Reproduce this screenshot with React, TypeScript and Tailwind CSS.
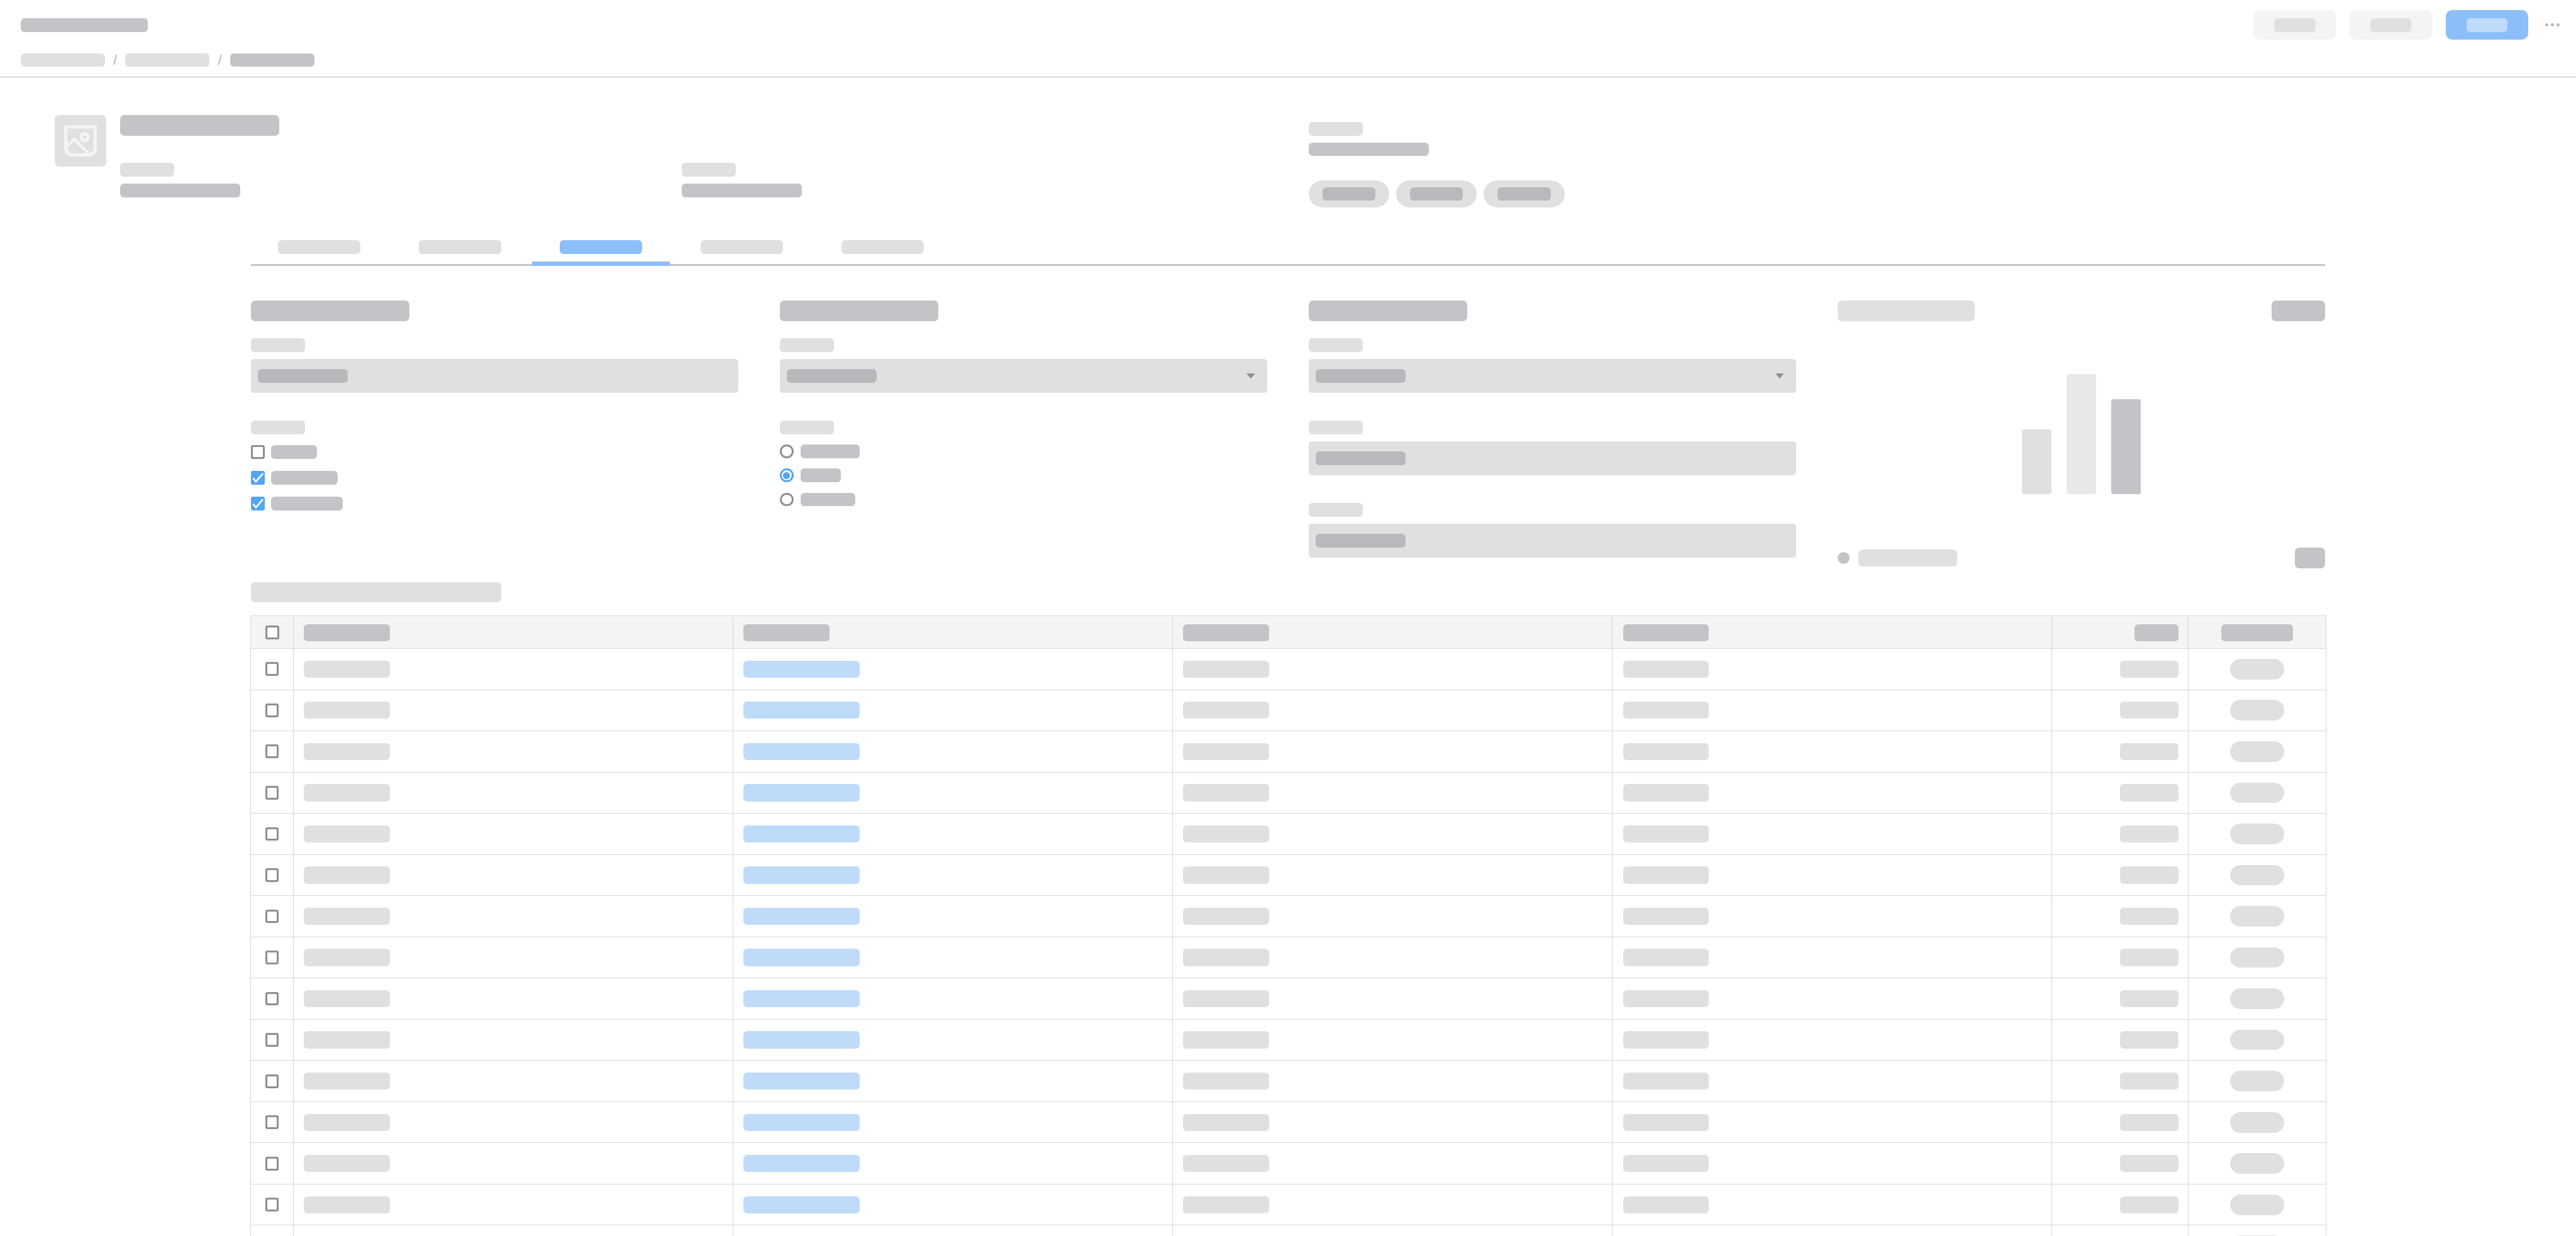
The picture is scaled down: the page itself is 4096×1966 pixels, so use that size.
const rows = Array.from({ length: 15 }, (_, i) => i);

function LogoIcon() {
  return (
    <svg viewBox="0 0 76 74" className="w-[51.88px] h-[50.52px]" fill="none" stroke="#f4f4f4">
      <path d="M4 4H72V54a16 16 0 0 1-16 16H20a16 16 0 0 1-16-16Z" strokeWidth="8" />
      <circle cx="48" cy="28" r="8" strokeWidth="8" />
      <path d="M8 48L23.5 33L57 66" strokeWidth="7" />
    </svg>
  );
}

function Checkbox({ checked = false, className = "" }: { checked?: boolean; className?: string }) {
  if (checked) {
    return (
      <span className="flex w-[21.85px] h-[21.85px] shrink-0 items-center justify-center rounded-[3px] bg-[#52a5f7]">
        <svg viewBox="0 0 32 32" className="w-[21.85px] h-[21.85px]" fill="none" stroke="#ffffff" strokeWidth="4">
          <path d="M5 17L11.5 25L28 6" />
        </svg>
      </span>
    );
  }
  return (
    <span
      className={`block w-[21.85px] h-[21.85px] shrink-0 rounded-[3px] border-[3px] border-[#8e8e93] bg-white ${className}`}
    />
  );
}

function Radio({ selected = false }: { selected?: boolean }) {
  if (selected) {
    return (
      <span className="flex w-[21.85px] h-[21.85px] shrink-0 items-center justify-center rounded-full border-[3px] border-[#52a5f7] bg-white">
        <span className="block w-[11px] h-[11px] rounded-full bg-[#52a5f7]" />
      </span>
    );
  }
  return <span className="block w-[21.85px] h-[21.85px] shrink-0 rounded-full border-[3px] border-[#8e8e93] bg-white" />;
}

function Heading() {
  return <div className="w-[252.58px] h-[32.77px] rounded-[7px] bg-[#c4c4c8]" />;
}

function Label() {
  return <div className="w-[86.02px] h-[21.85px] rounded-[6px] bg-[#e0e0e0]" />;
}

function Field({ select = false }: { select?: boolean }) {
  return (
    <div className="mt-[10.92px] flex h-[54.61px] items-center justify-between rounded-[5px] bg-[#e0e0e0] pl-[10.92px] pr-[19.8px]">
      <div className="w-[143.36px] h-[21.85px] rounded-[6px] bg-[#b9b9bd]" />
      {select && (
        <svg viewBox="0 0 20 12" className="w-[13.65px] h-[8.19px]" fill="#8e8e93">
          <polygon points="0,0 20,0 10,12" />
        </svg>
      )}
    </div>
  );
}

function Pill() {
  return (
    <div className="flex h-[43.69px] w-[128.34px] items-center justify-center rounded-full bg-[#e0e0e0]">
      <div className="w-[84.65px] h-[21.85px] rounded-[6px] bg-[#b9b9bd]" />
    </div>
  );
}

function Tab({ active = false }: { active?: boolean }) {
  return (
    <div
      className={`-mb-[3px] flex w-[218.45px] justify-center border-b-[7px] pt-[16.38px] pb-[12.12px] ${
        active ? "border-[#8cbff9]" : "border-transparent"
      }`}
    >
      <div className={`w-[131.07px] h-[21.85px] rounded-[6px] ${active ? "bg-[#8cbff9]" : "bg-[#e0e0e0]"}`} />
    </div>
  );
}

function HeaderCellBar() {
  return <div className="w-[136.53px] h-[27.31px] rounded-[6px] bg-[#c4c4c8]" />;
}

function BodyCellBar() {
  return <div className="w-[136.53px] h-[27.31px] rounded-[6px] bg-[#e0e0e0]" />;
}

export default function App() {
  return (
    <div className="w-[4096px] h-[1966px] overflow-hidden bg-white font-['Liberation_Sans',sans-serif]">
      {/* top bar */}
      <header className="flex h-[122.88px] justify-between border-b border-[#b5b5b5] pl-[32.77px] pr-[26px]">
        <div className="pt-[28.67px]">
          <div className="w-[202.07px] h-[21.85px] rounded-[6px] bg-[#c4c4c8]" />
          <div className="mt-[34.13px] flex items-center">
            <div className="w-[133.8px] h-[21.85px] rounded-[6px] bg-[#e0e0e0]" />
            <span className="w-[32.77px] text-center text-[22px] leading-[21.85px] text-[#b3b3b8]">/</span>
            <div className="w-[133.8px] h-[21.85px] rounded-[6px] bg-[#e0e0e0]" />
            <span className="w-[32.77px] text-center text-[22px] leading-[21.85px] text-[#b3b3b8]">/</span>
            <div className="w-[133.8px] h-[21.85px] rounded-[6px] bg-[#c4c4c8]" />
          </div>
        </div>
        <div className="flex items-start pt-[16.38px]">
          <div className="flex h-[46.42px] w-[131.07px] items-center justify-center rounded-[10px] bg-[#f4f4f4]">
            <div className="w-[66.22px] h-[21.85px] rounded-[6px] bg-[#e0e0e0]" />
          </div>
          <div className="ml-[21.85px] flex h-[46.42px] w-[131.07px] items-center justify-center rounded-[10px] bg-[#f4f4f4]">
            <div className="w-[65.54px] h-[21.85px] rounded-[6px] bg-[#e0e0e0]" />
          </div>
          <div className="ml-[21.85px] flex h-[46.42px] w-[131.07px] items-center justify-center rounded-[10px] bg-[#8cbff9]">
            <div className="w-[65.54px] h-[21.85px] rounded-[6px] bg-[#bfdbfa]" />
          </div>
          <div className="ml-[26.7px] flex h-[46.42px] items-center gap-[3.41px]">
            <span className="block w-[5.46px] h-[5.46px] rounded-full bg-[#bbbbbb]" />
            <span className="block w-[5.46px] h-[5.46px] rounded-full bg-[#bbbbbb]" />
            <span className="block w-[5.46px] h-[5.46px] rounded-full bg-[#bbbbbb]" />
          </div>
        </div>
      </header>

      {/* summary */}
      <section className="flex items-start pl-[87.38px] pt-[60.07px] pb-[35.5px]">
        <div className="flex h-[81.92px] w-[81.92px] shrink-0 items-center justify-center rounded-[7px] bg-[#e0e0e0]">
          <LogoIcon />
        </div>
        <div className="ml-[21.85px] w-[1889.64px] shrink-0">
          <div className="w-[252.58px] h-[32.77px] rounded-[7px] bg-[#c4c4c8]" />
          <div className="mt-[43.69px] flex">
            <div className="w-[892.93px]">
              <Label />
              <div className="mt-[10.92px] w-[191.15px] h-[21.85px] rounded-[6px] bg-[#c4c4c8]" />
            </div>
            <div>
              <Label />
              <div className="mt-[10.92px] w-[191.15px] h-[21.85px] rounded-[6px] bg-[#c4c4c8]" />
            </div>
          </div>
        </div>
        <div className="pt-[10.92px]">
          <Label />
          <div className="mt-[10.92px] w-[191.15px] h-[21.85px] rounded-[6px] bg-[#c4c4c8]" />
          <div className="mt-[38.23px] flex gap-[10.92px]">
            <Pill />
            <Pill />
            <Pill />
          </div>
        </div>
      </section>

      <main className="px-[398.68px]">
        {/* tabs */}
        <div className="flex gap-[5.46px] border-b-[3px] border-[#c4c4c8]">
          <Tab />
          <Tab />
          <Tab active />
          <Tab />
          <Tab />
        </div>

        {/* form grid */}
        <div className="mt-[54.61px] grid grid-cols-4 gap-x-[65.54px]">
          <div>
            <Heading />
            <div className="mt-[27.31px]">
              <Label />
            </div>
            <Field />
            <div className="mt-[43.69px]">
              <Label />
            </div>
            <div className="mt-[17.75px] flex flex-col gap-[19.11px]">
              <div className="flex items-center gap-[10.92px]">
                <Checkbox />
                <div className="w-[72.36px] h-[21.85px] rounded-[6px] bg-[#c4c4c8]" />
              </div>
              <div className="flex items-center gap-[10.92px]">
                <Checkbox checked />
                <div className="w-[105.13px] h-[21.85px] rounded-[6px] bg-[#c4c4c8]" />
              </div>
              <div className="flex items-center gap-[10.92px]">
                <Checkbox checked />
                <div className="w-[113.32px] h-[21.85px] rounded-[6px] bg-[#c4c4c8]" />
              </div>
            </div>
          </div>

          <div>
            <Heading />
            <div className="mt-[27.31px]">
              <Label />
            </div>
            <Field select />
            <div className="mt-[43.69px]">
              <Label />
            </div>
            <div className="mt-[16.38px] flex flex-col gap-[16.38px]">
              <div className="flex items-center gap-[11.26px]">
                <Radio />
                <div className="w-[94.21px] h-[21.85px] rounded-[6px] bg-[#c4c4c8]" />
              </div>
              <div className="flex items-center gap-[11.26px]">
                <Radio selected />
                <div className="w-[64.17px] h-[21.85px] rounded-[6px] bg-[#c4c4c8]" />
              </div>
              <div className="flex items-center gap-[11.26px]">
                <Radio />
                <div className="w-[87.38px] h-[21.85px] rounded-[6px] bg-[#c4c4c8]" />
              </div>
            </div>
          </div>

          <div>
            <Heading />
            <div className="mt-[27.31px]">
              <Label />
            </div>
            <Field select />
            <div className="mt-[43.69px]">
              <Label />
            </div>
            <Field />
            <div className="mt-[43.69px]">
              <Label />
            </div>
            <Field />
          </div>

          <div>
            <div className="flex justify-between">
              <div className="w-[218.45px] h-[32.77px] rounded-[7px] bg-[#e0e0e0]" />
              <div className="w-[85.33px] h-[32.77px] rounded-[7px] bg-[#c4c4c8]" />
            </div>
            <div className="mt-[84.65px] flex h-[191.15px] items-end justify-center gap-[23.21px]">
              <div className="w-[47.79px] h-[103.77px] rounded-[4px] bg-[#e0e0e0]" />
              <div className="w-[47.79px] h-[191.15px] rounded-[4px] bg-[#e8e8e8]" />
              <div className="w-[47.79px] h-[151.55px] rounded-[4px] bg-[#c4c4c8]" />
            </div>
            <div className="mt-[84.3px] flex items-center justify-between">
              <div className="flex items-center gap-[13.65px]">
                <div className="w-[19.11px] h-[19.11px] rounded-full bg-[#c4c4c8]" />
                <div className="w-[157.01px] h-[27.31px] rounded-[6px] bg-[#e0e0e0]" />
              </div>
              <div className="w-[48.47px] h-[33.1px] rounded-[7px] bg-[#c4c4c8]" />
            </div>
          </div>
        </div>

        {/* table */}
        <div className="mt-[21.85px] w-[398.68px] h-[32.77px] rounded-[7px] bg-[#e0e0e0]" />
        <div className="mt-[20.85px] -ml-[0.68px] w-[3300.74px] border-t border-l border-[#d6d6d6]">
          <div className="grid h-[51.88px] grid-cols-[68px_699.05px_699.05px_699.05px_699.05px_217.09px_218.45px] border-b border-[#d6d6d6] bg-[#f4f4f4]">
            <div className="flex items-center justify-center border-r border-[#d6d6d6] pt-[1.2px]">
              <Checkbox className="ml-[1.4px]" />
            </div>
            <div className="flex items-center border-r border-[#d6d6d6] pl-[16.38px] pt-[1.2px]">
              <HeaderCellBar />
            </div>
            <div className="flex items-center border-r border-[#d6d6d6] pl-[16.38px] pt-[1.2px]">
              <HeaderCellBar />
            </div>
            <div className="flex items-center border-r border-[#d6d6d6] pl-[16.38px] pt-[1.2px]">
              <HeaderCellBar />
            </div>
            <div className="flex items-center border-r border-[#d6d6d6] pl-[16.38px] pt-[1.2px]">
              <HeaderCellBar />
            </div>
            <div className="flex items-center justify-end border-r border-[#d6d6d6] pr-[15.38px] pt-[1.2px]">
              <div className="w-[69.63px] h-[27.31px] rounded-[6px] bg-[#c4c4c8]" />
            </div>
            <div className="flex items-center justify-center border-r border-[#d6d6d6] pt-[1.2px]">
              <div className="w-[114.69px] h-[27.31px] rounded-[6px] bg-[#c4c4c8]" />
            </div>
          </div>
          {rows.map((r) => (
            <div
              key={r}
              className="grid h-[65.54px] grid-cols-[68px_699.05px_699.05px_699.05px_699.05px_217.09px_218.45px] border-b border-[#d6d6d6]"
            >
              <div className="flex items-center justify-center border-r border-[#d6d6d6]">
                <Checkbox />
              </div>
              <div className="flex items-center border-r border-[#d6d6d6] pl-[16.38px]">
                <BodyCellBar />
              </div>
              <div className="flex items-center border-r border-[#d6d6d6] pl-[16.38px]">
                <div className="w-[184.32px] h-[27.31px] rounded-[6px] bg-[#bfdbfa]" />
              </div>
              <div className="flex items-center border-r border-[#d6d6d6] pl-[16.38px]">
                <BodyCellBar />
              </div>
              <div className="flex items-center border-r border-[#d6d6d6] pl-[16.38px]">
                <BodyCellBar />
              </div>
              <div className="flex items-center justify-end border-r border-[#d6d6d6] pr-[15.38px]">
                <div className="w-[92.84px] h-[27.31px] rounded-[6px] bg-[#e0e0e0]" />
              </div>
              <div className="flex items-center justify-center border-r border-[#d6d6d6]">
                <div className="w-[86.02px] h-[32.77px] rounded-full bg-[#e0e0e0]" />
              </div>
            </div>
          ))}
        </div>
      </main>
    </div>
  );
}
